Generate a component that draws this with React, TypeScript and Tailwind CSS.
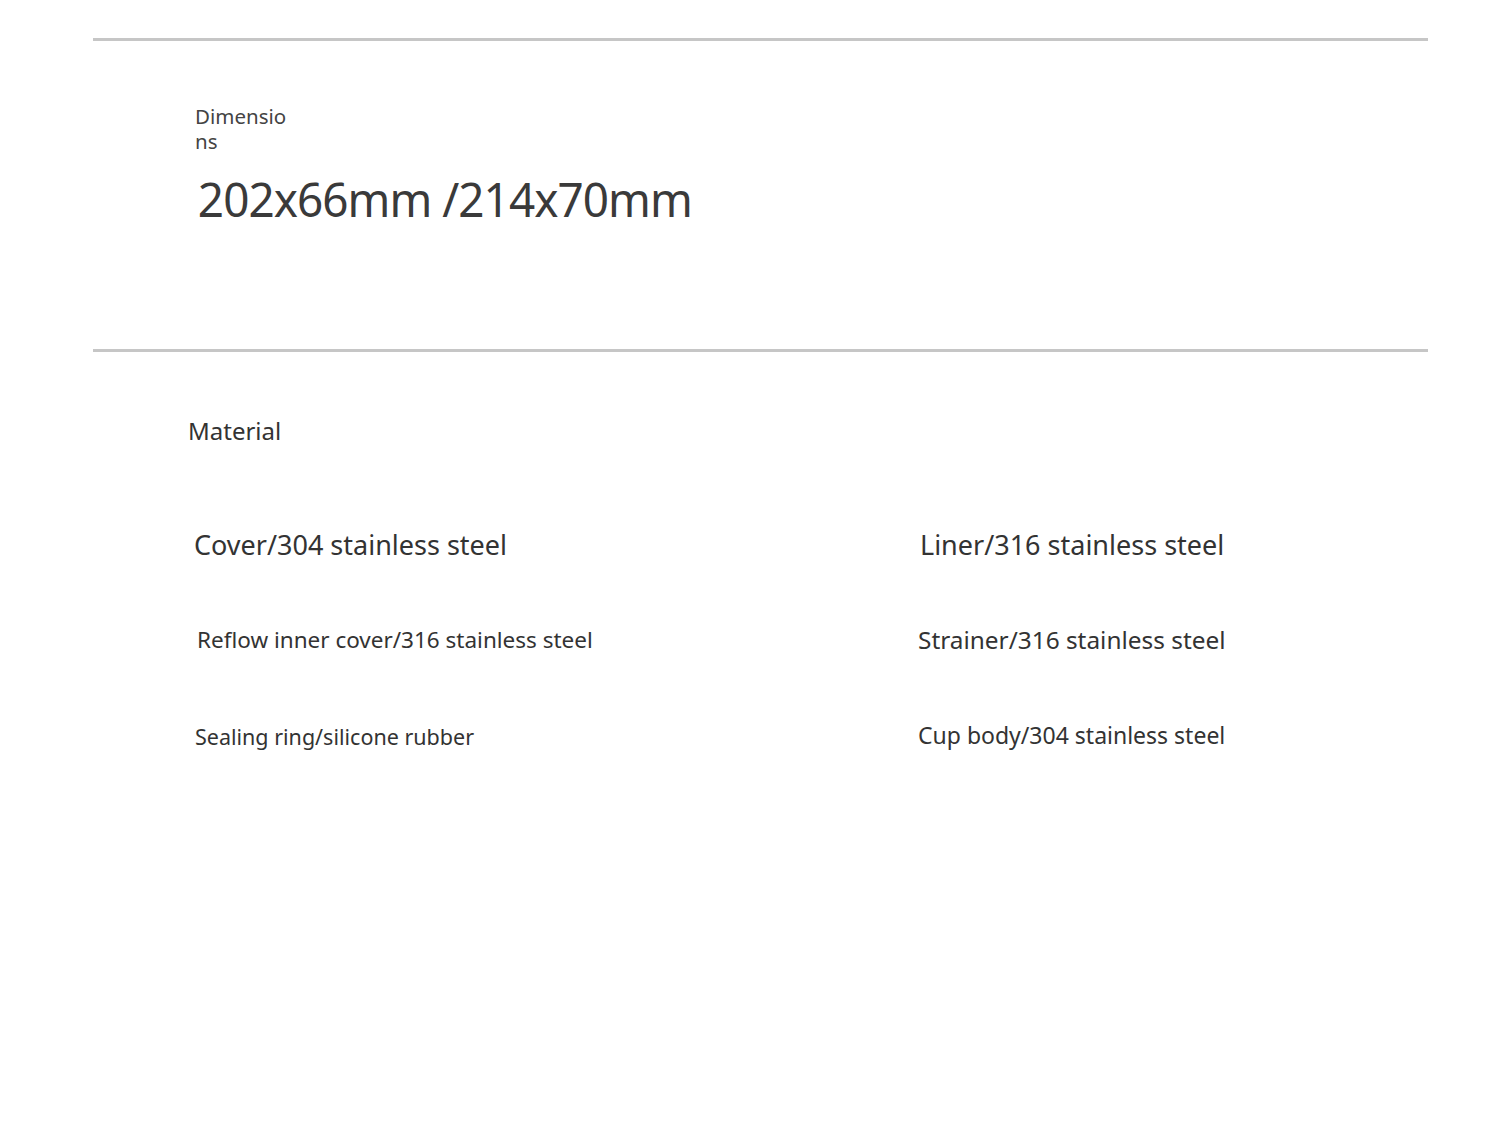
import React from "react";

export default function App() {
  return (
    <div className="w-[1500px] h-[1125px] bg-white text-[#333333]" style={{ fontFamily: '"Noto Sans", "Open Sans", sans-serif' }}>
      <div className="pl-[93px] pr-[72px] pt-[38px]">
        <div className="h-[3px] bg-[#c6c6c6]" />
        <div className="pl-[102px] pt-[63px] h-[308px]">
          <div className="w-[100px] text-[20.5px] leading-[24.5px] text-[#444]">Dimensio<br />ns</div>
          <div className="mt-[16px] pl-[3px] text-[48px] leading-[60px] text-[#3a3a3a] tracking-[-1px] origin-left scale-x-[0.955]">202x66mm /214x70mm</div>
        </div>
        <div className="h-[3px] bg-[#c6c6c6]" />
        <div className="pl-[95px] pt-[64px] text-[24px] leading-[30px]">Material</div>
        <div className="grid grid-cols-[724px_1fr] pl-[101px] mt-[82px]">
          <div className="flex flex-col">
            <div className="h-[97px] text-[27px] leading-[34px]">Cover/304 stainless steel</div>
            <div className="h-[98px] pl-[3px] text-[22.5px] leading-[30px]">Reflow inner cover/316 stainless steel</div>
            <div className="text-[21.5px] leading-[28px] pl-[1px]">Sealing ring/silicone rubber</div>
          </div>
          <div className="flex flex-col">
            <div className="h-[97px] pl-[2px] text-[27px] leading-[34px]">Liner/316 stainless steel</div>
            <div className="h-[96px] text-[24.4px] leading-[30px]">Strainer/316 stainless steel</div>
            <div className="text-[23px] leading-[28px]">Cup body/304 stainless steel</div>
          </div>
        </div>
      </div>
    </div>
  );
}
